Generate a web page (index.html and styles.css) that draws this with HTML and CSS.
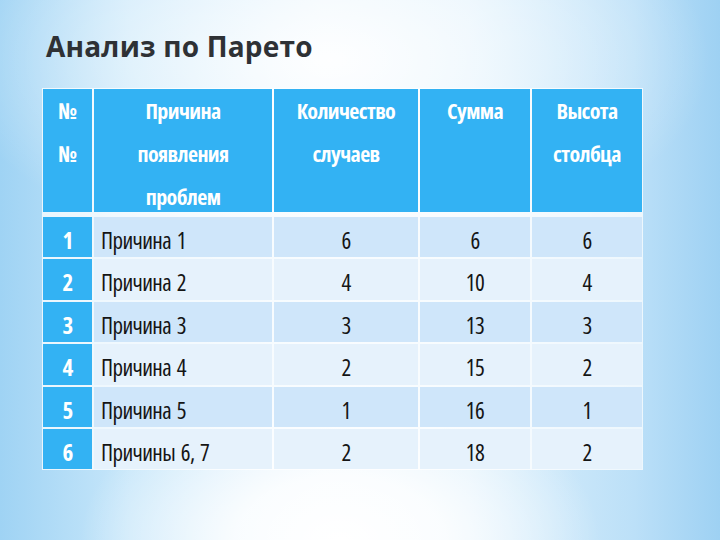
FILE: index.html
```html
<!DOCTYPE html>
<html lang="ru">
<head>
<meta charset="utf-8">
<link rel="stylesheet" href="styles.css">
</head>
<body>
<div class="slide">
  <h1 class="title">Анализ по Парето</h1>
  <div class="table">
    <div class="th c1"><span>№<br>№</span></div>
    <div class="th"><span>Причина<br>появления<br>проблем</span></div>
    <div class="th"><span>Количество<br>случаев</span></div>
    <div class="th"><span>Сумма</span></div>
    <div class="th"><span>Высота<br>столбца</span></div>

    <div class="num">1</div><div class="td odd name">Причина 1</div><div class="td odd">6</div><div class="td odd">6</div><div class="td odd">6</div>
    <div class="num">2</div><div class="td even name">Причина 2</div><div class="td even">4</div><div class="td even">10</div><div class="td even">4</div>
    <div class="num">3</div><div class="td odd name">Причина 3</div><div class="td odd">3</div><div class="td odd">13</div><div class="td odd">3</div>
    <div class="num">4</div><div class="td even name">Причина 4</div><div class="td even">2</div><div class="td even">15</div><div class="td even">2</div>
    <div class="num">5</div><div class="td odd name">Причина 5</div><div class="td odd">1</div><div class="td odd">16</div><div class="td odd">1</div>
    <div class="num">6</div><div class="td even name">Причины 6, 7</div><div class="td even">2</div><div class="td even">18</div><div class="td even">2</div>
  </div>
</div>
</body>
</html>
```

FILE: styles.css
```css
html, body {
  margin: 0;
  padding: 0;
}
.slide {
  width: 720px;
  height: 540px;
  overflow: hidden;
  box-sizing: border-box;
  padding: 28px 0 0 42px;
  background:
    radial-gradient(ellipse 260px 160px at 340px 540px, #ffffff 0%, rgba(255,255,255,0.85) 40%, rgba(255,255,255,0) 100%),
    radial-gradient(ellipse 380px 200px at 330px 60px, rgba(255,255,255,0.95) 0%, rgba(255,255,255,0) 100%),
    linear-gradient(90deg, #9fd3f4 0%, #c8e7fa 18%, #e6f4fd 45%, #dff1fc 65%, #bce0f8 88%, #9ed1f3 100%);
}
.title {
  margin: 0 0 24px 4px;
  font-family: "Open Sans", "DejaVu Sans", sans-serif;
  font-weight: 700;
  font-size: 28px;
  line-height: 36px;
  color: #2e3135;
  letter-spacing: 0.2px;
}
.table {
  display: grid;
  grid-template-columns: 49px 178px 144px 110px 110px;
  grid-template-rows: 126px repeat(6, 40.4px);
  gap: 2px;
  padding: 1px;
  width: max-content;
  background: rgba(255,255,255,0.75);
  font-family: "Open Sans", "DejaVu Sans", sans-serif;
  font-stretch: 75%;
  font-size: 23px;
  letter-spacing: -0.6px;
  word-spacing: 2px;
}
.th {
  background: #33b2f3;
  color: #ffffff;
  font-weight: 700;
  font-size: 22px;
  text-align: center;
  line-height: 43px;
  margin-bottom: 3px;
}
.num {
  background: #33b2f3;
  color: #ffffff;
  font-weight: 700;
  text-align: center;
  line-height: 40px;
  padding-top: 3px;
}
.td {
  color: #151515;
  text-align: center;
  line-height: 40px;
  padding-top: 3px;
}
.td.name {
  text-align: left;
  padding-left: 7px;
}
.odd {
  background: #cfe6fa;
}
.even {
  background: #e6f2fc;
}
```
